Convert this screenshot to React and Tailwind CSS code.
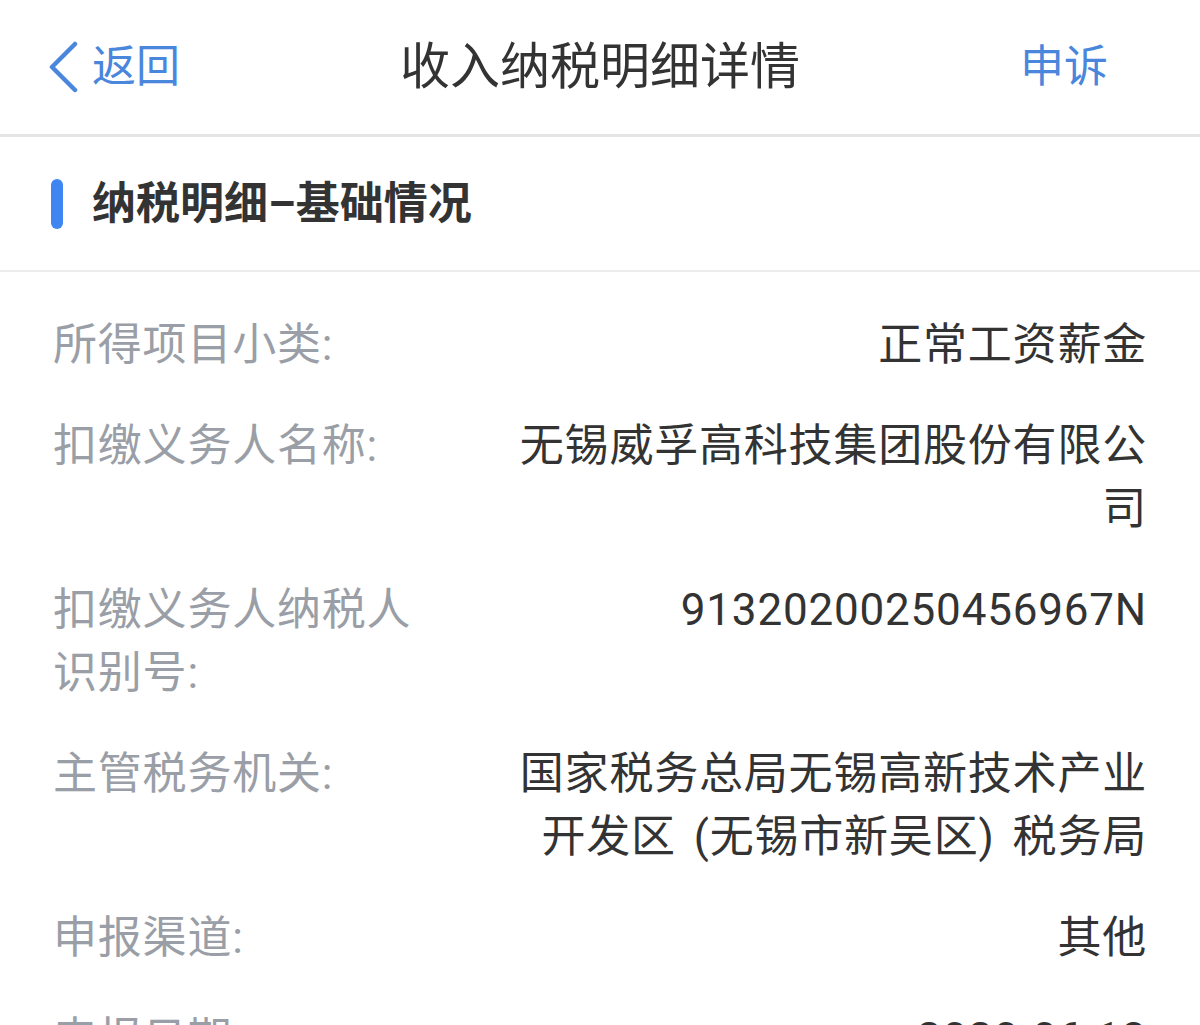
const rows = [
  { label: '所得项目小类:', value: '正常工资薪金' },
  { label: '扣缴义务人名称:', value: '无锡威孚高科技集团股份有限公司' },
  { label: '扣缴义务人纳税人识别号:', value: '91320200250456967N' },
  {
    label: '主管税务机关:',
    value: (
      <>
        国家税务总局无锡高新技术产业开发区<span className="pl-[18px]">(</span>无锡市新吴区<span className="pr-[18px]">)</span>税务局
      </>
    ),
  },
  { label: '申报渠道:', value: '其他' },
  { label: '申报日期:', value: '2020-06-13' },
];

function BackIcon() {
  return (
    <svg width="32" height="52" viewBox="0 0 32 52" fill="none">
      <path d="M27 3 L4 26 L27 49" stroke="#4a86db" strokeWidth="4.5" strokeLinecap="round" strokeLinejoin="round" />
    </svg>
  );
}

export default function App() {
  return (
    <div className="h-[1025px] overflow-hidden bg-white font-['Roboto','Noto_Sans_CJK_SC',sans-serif]">
      {/* Nav bar */}
      <div className="grid h-[137px] grid-cols-[1fr_auto_1fr] items-center border-b-[3px] border-[#e4e5e7]">
        <div className="flex items-center gap-[12px] pl-[48px] text-[44px] text-[#4a86db]">
          <BackIcon />
          <span>返回</span>
        </div>
        <div className="text-[50px] text-[#333]">收入纳税明细详情</div>
        <div className="flex justify-end pr-[92px] text-[44px] text-[#4a86db]">申诉</div>
      </div>

      {/* Section title */}
      <div className="flex h-[135px] items-center border-b-2 border-[#ececec]">
        <div className="ml-[51px] h-[50px] w-[12px] rounded-full bg-[#3f86f2]" />
        <div className="ml-[29px] text-[44px] font-bold text-[#333]">纳税明细–基础情况</div>
      </div>

      {/* Detail rows */}
      <div className="px-[53px] pt-[23px]">
        {rows.map((r) => (
          <div key={r.label} className="flex py-[19px] text-[44px] leading-[63px] tracking-[0.8px]">
            <div className="w-[400px] shrink-0 text-[#9a9ea6]">{r.label}</div>
            <div className="ml-[44px] flex-1 text-right text-[#333]">{r.value}</div>
          </div>
        ))}
      </div>
    </div>
  );
}
